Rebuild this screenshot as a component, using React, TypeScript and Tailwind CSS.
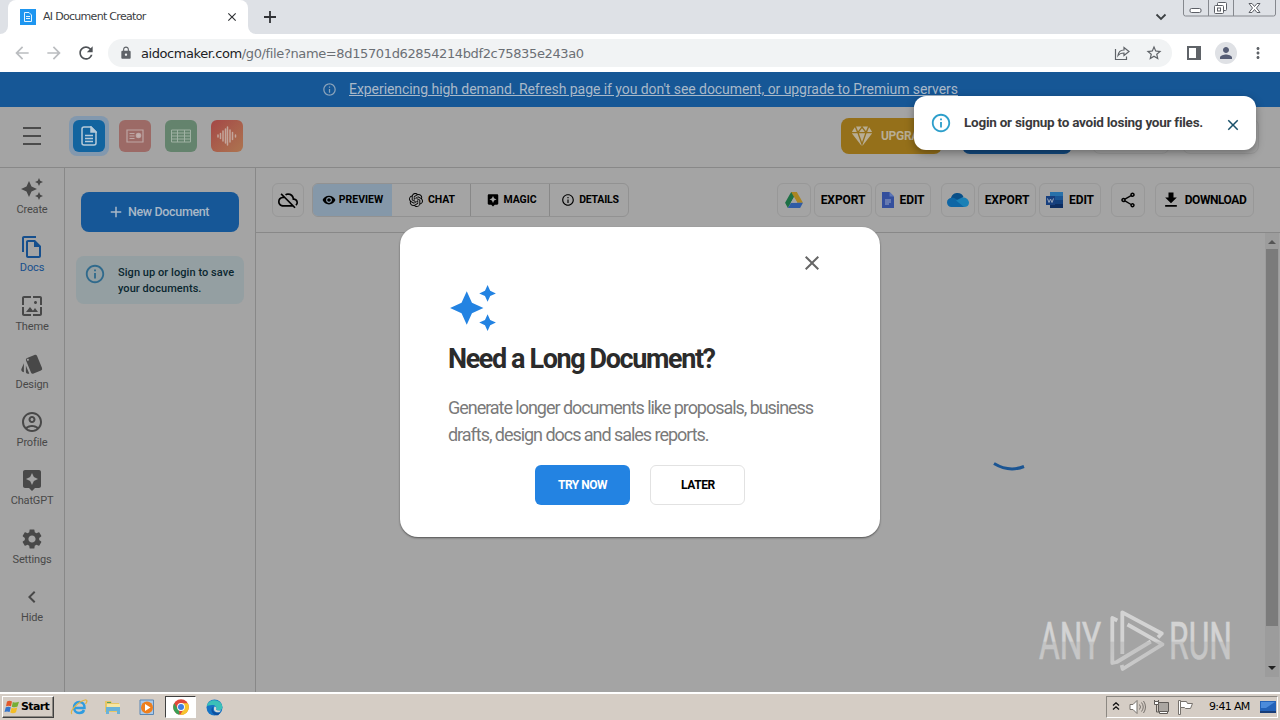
import type { ReactNode } from 'react'
import clsx from 'clsx'
import {
  MdAdd,
  MdArrowBack,
  MdArrowForward,
  MdAssistant,
  MdAutoAwesome,
  MdChevronLeft,
  MdClose,
  MdDownload,
  MdInfoOutline,
  MdLock,
  MdMoreVert,
  MdOutlineAccountCircle,
  MdOutlineCloudOff,
  MdOutlineFileCopy,
  MdOutlineShare,
  MdPerson,
  MdRefresh,
  MdSettings,
  MdStarBorder,
  MdStyle,
  MdVisibility,
  MdWallpaper,
} from 'react-icons/md'
import { SiOpenai } from 'react-icons/si'
import { IoDiamond } from 'react-icons/io5'

const sideItems = [
  { label: 'Create', icon: MdAutoAwesome },
  { label: 'Docs', icon: MdOutlineFileCopy, active: true },
  { label: 'Theme', icon: MdWallpaper },
  { label: 'Design', icon: MdStyle },
  { label: 'Profile', icon: MdOutlineAccountCircle },
  { label: 'ChatGPT', icon: MdAssistant },
  { label: 'Settings', icon: MdSettings },
  { label: 'Hide', icon: MdChevronLeft },
]

function TabStrip() {
  return (
    <div className="flex h-[34px] bg-[#dee1e6] font-['DejaVu_Sans',sans-serif]">
      <div className="flex w-2 items-end bg-white">
        <div className="h-full w-2 rounded-br-lg bg-[#dee1e6]" />
      </div>
      <div className="flex w-60 items-center rounded-t-lg bg-white pl-3">
        <div className="flex h-4 w-4 items-center justify-center bg-[#1e96f0]">
          <svg width="10" height="12" viewBox="0 0 10 12" fill="none" stroke="#e3f3ff">
            <path d="M1.5 1.5h4.500l2.500 2.500v6.500h-7zM3 5.500h4M3 7.500h4" />
          </svg>
        </div>
        <span className="ml-[7px] flex-1 pt-px text-[11px] tracking-[-0.7px] whitespace-nowrap text-[#3c4043]">
          AI Document Creator
        </span>
        <MdClose className="mr-[9px] h-3.5 w-3.5 text-[#303236]" />
      </div>
      <div className="w-2 bg-white">
        <div className="h-full w-2 rounded-bl-lg bg-[#dee1e6]" />
      </div>
      <svg className="mt-2.5 ml-[7px] h-3.5 w-3.5" viewBox="0 0 14 14" stroke="#303236" strokeWidth="1.800">
        <path d="M7 1v12M1 7h12" />
      </svg>
      <div className="flex-1" />
      <svg className="mt-3 mr-4 h-3 w-3" viewBox="0 0 12 12" fill="none" stroke="#3c4043" strokeWidth="1.800">
        <path d="M1.500 2.500 6 7l4.500-4.500" />
      </svg>
      <svg className="mr-1 h-[17px] w-[93px]" viewBox="0 0 93 17" fill="none" stroke="#85888e">
        <path d="M.5 0v14a2 2 0 0 0 2 2h88a2 2 0 0 0 2-2V0M25.500 0v16M50.500 0v16" />
        <g stroke="#5c5f66">
          <rect x="7" y="8.500" width="11" height="4" rx="1.500" fill="#fff" />
          <rect x="34.500" y="2.500" width="9" height="8" rx="1" fill="#fff" />
          <rect x="31.500" y="5.500" width="9" height="8" rx="1" fill="#fff" />
          <rect x="34.500" y="8" width="3" height="3" />
          <path d="M66 3.500h3l2.500 3 2.500-3h3L73.500 8l3.500 4.500h-3l-2.500-3-2.500 3h-3L69.500 8z" fill="#fff" />
        </g>
      </svg>
    </div>
  )
}

function AddressBar() {
  return (
    <div className="flex h-[38px] items-center bg-white pb-px font-['DejaVu_Sans',sans-serif]">
      <MdArrowBack className="ml-3 h-5 w-5 text-[#bbbdc0]" />
      <MdArrowForward className="ml-3 h-5 w-5 text-[#bbbdc0]" />
      <MdRefresh className="ml-3 h-5 w-5 text-[#4e5256]" />
      <div className="ml-3 flex h-7 w-[1064px] items-center rounded-full bg-[#f1f3f4] pl-[11px]">
        <MdLock className="h-3.5 w-3.5 text-[#5f6368]" />
        <span className="ml-2 pt-0.5 text-[13px] whitespace-nowrap text-[#202124]">
          <span className="tracking-[-0.42px]">aidocmaker.com</span>
          <span className="tracking-[-0.37px] text-[#6b6f74]">/g0/file?name=8d15701d62854214bdf2c75835e243a0</span>
        </span>
        <div className="flex-1" />
        <svg className="mr-[15px] h-4 w-4" viewBox="0 0 16 16" fill="none" stroke="#5f6368" strokeWidth="1.200">
          <path d="M1.500 4v10.500h11v-3M4 10.500c.5-4 3-5.500 6-5.500V2.500l5 4-5 4V8c-2.500 0-4.500.5-6 2.500z" />
        </svg>
        <MdStarBorder className="mr-[9px] h-[18px] w-[18px] text-[#5f6368]" />
      </div>
      <svg className="ml-[15px] h-3.5 w-3.5" viewBox="0 0 14 14">
        <path d="M1 1h12v12H1z" fill="none" stroke="#5f6368" strokeWidth="2" />
        <path d="M9 1h4v12H9z" fill="#5f6368" />
      </svg>
      <div className="ml-[14px] flex h-[22px] w-[22px] items-center justify-center rounded-full bg-[#dfe1e5]">
        <MdPerson className="h-[18px] w-[18px] text-[#565d75]" />
      </div>
      <MdMoreVert className="ml-3 h-[18px] w-[18px] text-[#5f6368]" />
    </div>
  )
}

function Banner() {
  return (
    <div className="flex h-[35px] items-center bg-[#165796] pl-[322px] text-[#a9b9c9]">
      <MdInfoOutline className="h-[15px] w-[15px] text-[#8ba3ba]" />
      <span className="ml-3 text-[14px] leading-[17px] tracking-[-0.06px] whitespace-nowrap underline">
        Experiencing high demand. Refresh page if you don't see document, or upgrade to Premium servers
      </span>
    </div>
  )
}

function Header() {
  return (
    <div className="flex h-[61px] items-center border-b border-[#888888] pb-0.5 pl-[23px]">
      <svg width="18" height="20" viewBox="0 0 18 20" stroke="#4b4b4b" strokeWidth="2">
        <path d="M0 2h18M0 10h18M0 18h18" />
      </svg>
      <div className="ml-7 flex h-10 w-10 items-center justify-center rounded-lg bg-[#8298ae]">
        <div className="flex h-8 w-8 items-center justify-center rounded-md bg-[#12649f]">
          <svg width="16" height="20" viewBox="0 0 16 20" fill="none" stroke="#b6cad9" strokeWidth="1.500">
            <path d="M3 1h7l5 5v11a2 2 0 0 1-2 2H3a2 2 0 0 1-2-2V3a2 2 0 0 1 2-2zM4 9.500h8M4 12.500h8M4 15.500h8" />
            <path d="M10 1v5h5z" fill="#b6cad9" />
          </svg>
        </div>
      </div>
      <div className="ml-[10px] flex h-8 w-8 items-center justify-center rounded-md bg-[#9c6a66]">
        <svg width="18" height="14" viewBox="0 0 18 14" fill="none" stroke="#bda6a4" strokeWidth="1.200">
          <path d="M1 1h16v12H1zM3.500 4.500h5M3.500 7h5M3.500 9.500h5" />
          <circle cx="12.500" cy="6.500" r="2.200" fill="#c4b1af" />
        </svg>
      </div>
      <div className="ml-[14px] flex h-8 w-8 items-center justify-center rounded-md bg-[#64836d]">
        <svg width="20" height="14" viewBox="0 0 20 14" fill="none" stroke="#9fb1a3">
          <path d="M.5 1h19v12H.5zM.5 4h19M.5 7h19M.5 10h19M6.500 1v12M13.500 1v12" />
        </svg>
      </div>
      <div className="ml-[14px] flex h-8 w-8 items-center justify-center rounded-md bg-linear-to-br from-[#a44747] to-[#ac7550]">
        <svg width="20" height="20" viewBox="0 0 20 20" stroke="#c3a59b" strokeWidth="1.500" strokeLinecap="round">
          <path d="M1 9v2M3.500 7.500v5M6 5v10M8.500 3v14M10.500 1v18M13 4v12M15.500 6.500v7M18.500 9v2" />
        </svg>
      </div>
      <div className="ml-[598px] flex h-9 w-[101px] shrink-0 items-center rounded-lg bg-[#95701a] pl-2.5 text-[#b8ad94]">
        <IoDiamond className="h-[22px] w-[22px]" />
        <span className="ml-2 text-xs font-bold tracking-tight">UPGRADE</span>
      </div>
      <div className="ml-5 h-9 w-[110px] rounded-lg bg-[#124a81]" />
      <div className="ml-5 h-9 w-[78px] rounded-lg border border-[#999999]" />
      <div className="ml-3 h-9 w-[77px] rounded-lg border border-[#999999]" />
    </div>
  )
}

function Sidebar() {
  return (
    <div className="w-[65px] shrink-0 border-r border-[#888888] pt-[9px]">
      {sideItems.map(({ label, icon: Icon, active }) => (
        <div
          key={label}
          className={clsx('flex h-[58.3px] flex-col items-center gap-px', active ? 'text-[#164f8d]' : 'text-[#484848]')}
        >
          <Icon className="h-6 w-6" />
          <span className="text-[11px] leading-4 tracking-[-0.15px]">{label}</span>
        </div>
      ))}
    </div>
  )
}

function DocsPanel() {
  return (
    <div className="w-[191px] shrink-0 border-r border-[#888888]">
      <div className="mt-6 ml-4 flex h-10 w-[158px] items-center rounded-lg bg-[#165797] pl-[26px] text-[#a9b8c7]">
        <MdAdd className="h-[18px] w-[18px]" />
        <span className="ml-[3px] text-[12.500px] font-medium tracking-[-0.35px] whitespace-nowrap">New Document</span>
      </div>
      <div className="mt-6 ml-[11px] flex h-12 w-[168px] rounded-lg bg-[#949fa2]">
        <MdInfoOutline className="mt-[7px] ml-2 h-[22px] w-[22px] text-[#306a8c]" />
        <p className="mt-[9px] ml-3 text-[11px] leading-4 font-medium tracking-[0.06px] whitespace-nowrap text-[#0b2730]">
          Sign up or login to save
          <br />
          your documents.
        </p>
      </div>
    </div>
  )
}

function ToolButton({ className, children }: { className: string; children: ReactNode }) {
  return (
    <div
      className={clsx(
        'flex h-[34px] shrink-0 items-center justify-center rounded-md border border-[#989898] text-[12px] font-bold whitespace-nowrap text-black',
        className,
      )}
    >
      {children}
    </div>
  )
}

function DriveIcon() {
  return (
    <svg className="mr-px" width="18" height="16" viewBox="0 0 19 17">
      <path d="M6.500 0h6l-9.500 17L0 11.500z" fill="#1d7045" />
      <path d="M6.500 0h6L19 11.500h-6z" fill="#aa8522" />
      <path d="M3 17l3.500-5.500H19L16 17z" fill="#2f5ba5" />
      <path d="M9.500 5.500 13 11.500H6z" fill="#a4a4a4" />
    </svg>
  )
}

function MainToolbar() {
  return (
    <div className="flex h-[65px] items-center border-b border-[#888888] pl-4">
      <ToolButton className="w-8">
        <MdOutlineCloudOff className="h-5 w-5" />
      </ToolButton>
      <div className="ml-2 flex h-[34px] w-[317px] shrink-0 overflow-hidden rounded-md border border-[#929292] text-[10.500px] font-bold text-black">
        <div className="flex w-[79px] items-center justify-center gap-[3px] bg-[#8598a9]">
          <MdVisibility className="h-3.5 w-3.5" />
          PREVIEW
        </div>
        <div className="flex w-[79px] items-center justify-center gap-[5px] border-r border-[#888888] pl-0.5 tracking-[-0.1px]">
          <SiOpenai className="h-3.5 w-3.5" />
          CHAT
        </div>
        <div className="flex w-[79px] items-center justify-center gap-1 border-r border-[#888888] pl-0.5 tracking-[-0.1px]">
          <MdAssistant className="h-3.5 w-3.5" />
          MAGIC
        </div>
        <div className="flex w-[78px] items-center justify-center gap-1 pl-0.5 tracking-[-0.2px]">
          <MdInfoOutline className="h-3.5 w-3.5" />
          DETAILS
        </div>
      </div>
      <ToolButton className="ml-[148px] w-[34px]">
        <DriveIcon />
      </ToolButton>
      <ToolButton className="ml-[3px] w-[58px] tracking-[-0.1px]">EXPORT</ToolButton>
      <ToolButton className="ml-[3px] w-14 gap-1.5 tracking-[-0.1px]">
        <svg width="12" height="16" viewBox="0 0 12 16">
          <path d="M0 0h7.500L12 4.500V16H0z" fill="#344f9d" />
          <path d="M7.500 0 12 4.500H7.500z" fill="#5d77b8" />
          <path d="M3 8h6M3 10h6M3 12h4" stroke="#98a5c5" />
        </svg>
        EDIT
      </ToolButton>
      <ToolButton className="ml-[10px] w-[34px]">
        <svg width="22" height="14" viewBox="0 0 22 14">
          <path d="M4 5C5 1 8 0 10.500 0c3 0 5 1.500 6 4l-8 6L2 12z" fill="#084f88" />
          <path d="M0 9.500C0 6.500 2 5 4.500 4.700c2-.2 3 .3 4.500 1.300L19 12c-1 1.500-2 2-3 2H4.500C2 14 0 12 0 9.500z" fill="#0e66a5" />
          <path d="M9 7.500l5-2.500c3-1.500 7.500.5 8 4.500 0 3-2 4.500-5 4.500z" fill="#1a80b6" />
        </svg>
      </ToolButton>
      <ToolButton className="ml-[3px] w-[58px] tracking-[-0.1px]">EXPORT</ToolButton>
      <ToolButton className="ml-[3px] w-[62px] gap-1.5 tracking-[-0.1px]">
        <svg width="17" height="16" viewBox="0 0 17 16">
          <path d="M4 0h13v4H4z" fill="#2871aa" />
          <path d="M4 4h13v4H4z" fill="#1a5594" />
          <path d="M4 8h13v4H4z" fill="#123f7c" />
          <path d="M4 12h13v4H4z" fill="#0c2c60" />
          <path d="M0 4h9v9H0z" fill="#173f7e" />
          <path d="M1.500 6.500 3 10.500l1.500-3.500L6 10.500l1.500-4" fill="none" stroke="#9ba8bb" />
        </svg>
        EDIT
      </ToolButton>
      <ToolButton className="ml-[10px] w-[34px]">
        <MdOutlineShare className="h-[18px] w-[18px]" />
      </ToolButton>
      <ToolButton className="ml-[10px] w-[99px] gap-1 pr-0.5 tracking-[-0.45px]">
        <MdDownload className="h-5 w-5" />
        DOWNLOAD
      </ToolButton>
    </div>
  )
}

function Scrollbar() {
  return (
    <div className="flex h-[444px] w-[14px] flex-col items-center bg-[#9c9c9c]">
      <svg className="mt-[7px] mb-[5px] h-1 w-2" viewBox="0 0 8 4">
        <path d="M0 4l4-4 4 4z" fill="#555" />
      </svg>
      <div className="h-[377px] w-3 bg-[#7b7b7b]" />
      <div className="flex-1" />
      <svg className="mb-[7px] h-1 w-2" viewBox="0 0 8 4">
        <path d="M0 0l4 4 4-4z" fill="#222" />
      </svg>
    </div>
  )
}

function Watermark() {
  return (
    <svg className="absolute top-[608px] left-[1036px] overflow-visible" width="204" height="66" viewBox="0 0 204 66">
      <defs>
        <linearGradient id="wm" x1="0" y1="0" x2="0" y2="66" gradientUnits="userSpaceOnUse">
          <stop offset="0.500" stopColor="#d3d3d3" />
          <stop offset="0.520" stopColor="#c3c3c3" />
          <stop offset="1" stopColor="#cbcbcb" />
        </linearGradient>
      </defs>
      <g fill="url(#wm)" stroke="url(#wm)" strokeWidth="0.600" fontFamily="Roboto, sans-serif" fontSize="51.500">
        <text x="3" y="51.300" textLength="62" lengthAdjust="spacingAndGlyphs">ANY</text>
        <text x="133" y="51.300" textLength="63" lengthAdjust="spacingAndGlyphs">RUN</text>
      </g>
      <g fill="none" stroke="url(#wm)" strokeWidth="3.800" strokeLinejoin="round">
        <path d="M81.300 12.500l-5-2.500v45l4.500-1 34-20.500" />
        <path d="M86.300 46V4.300l39.500 21.200-3.800 3.800" />
        <path d="M91.500 16.500l35 19.800-39.800 24.700-1-4" />
      </g>
    </svg>
  )
}

function LongDocumentDialog() {
  return (
    <div className="absolute top-[227px] left-[400px] flex h-[310px] w-[480px] flex-col rounded-[18px] bg-white px-12 shadow-[0_1px_2px_rgba(0,0,0,0.5)]">
      <MdClose className="mt-6 mr-2 h-6 w-6 self-end text-[#666666]" />
      <MdAutoAwesome className="mt-2 h-[50px] w-[50px] text-[#2383e2]" />
      <h2 className="mt-2 text-[27px] leading-9 font-bold tracking-[-1.4px] whitespace-nowrap text-[#2b2b2b]">
        Need a Long Document?
      </h2>
      <p className="mt-[17px] text-lg leading-[27px] tracking-[-1.04px] whitespace-nowrap text-[#7a7a7a]">
        Generate longer documents like proposals, business
        <br />
        drafts, design docs and sales reports.
      </p>
      <div className="mt-[17px] flex justify-center gap-5 text-xs font-bold">
        <button className="h-10 w-[95px] rounded-md bg-[#2383e2] tracking-[-0.5px] text-white">TRY NOW</button>
        <button className="h-10 w-[95px] rounded-md border border-[#e2e2e2] pl-px tracking-[-0.4px] text-black">LATER</button>
      </div>
    </div>
  )
}

function Toast() {
  return (
    <div className="absolute top-24 left-[914px] flex h-[54px] w-[342px] items-center rounded-xl bg-white pl-4 shadow-[0_3px_8px_rgba(0,0,0,0.35)]">
      <MdInfoOutline className="h-[22px] w-[22px] text-[#2e9fcb]" />
      <span className="ml-3 pb-0.5 text-[13.500px] font-bold tracking-[-0.24px] whitespace-nowrap text-[#3a3a3c]">
        Login or signup to avoid losing your files.
      </span>
      <MdClose className="absolute top-5 right-[14px] h-[18px] w-[18px] text-[#19506a]" />
    </div>
  )
}

function Taskbar() {
  return (
    <div className="flex h-7 items-center border-t-2 border-white bg-[#d5cdc5] font-['DejaVu_Sans',sans-serif] text-black">
      <div className="ml-[2px] flex h-[22px] w-[52px] items-center border border-t-white border-r-[#404040] border-b-[#404040] border-l-white pl-px shadow-[inset_-1px_-1px_#8c8882]">
        <svg width="16" height="16" viewBox="0 0 16 16">
          <path d="M3 2.500Q5.500 1 8 2.500L7 7.300Q4.500 6 2 7.300z" fill="#e2582a" />
          <path d="M8.800 3Q11.500 4.300 15 2.800L13.500 7.500Q11 9 7.800 7.700z" fill="#76ae36" />
          <path d="M1.800 8.300Q4.500 7 6.800 8.300L5.600 13Q3 12 .5 13z" fill="#3575cb" />
          <path d="M7.600 8.700Q10.500 10 13.200 8.500L12 13.200Q9 15 6.300 13.400z" fill="#f3bd27" />
        </svg>
        <span className="ml-px text-[11px] font-bold tracking-[-0.65px]">Start</span>
      </div>
      <svg className="ml-4 h-[18px] w-[18px]" viewBox="0 0 18 18" fill="none">
        <path d="M4 10h10.500c.3-4-2-6-5.200-6-3.300 0-5.300 2.300-5.300 5.500s2 5.500 5.300 5.500c2.300 0 4-1 4.700-3" stroke="#2f9ce0" strokeWidth="2.500" />
        <path d="M2 16C-1 13 9 3 15 2c3-.3 2 2 .5 4" stroke="#e0b445" strokeWidth="1.200" />
      </svg>
      <svg className="ml-4 h-[18px] w-[18px]" viewBox="0 0 18 18">
        <path d="M1 3h6l1 2h7v9H1z" fill="#e7c566" />
        <path d="M3 6h13v7H3z" fill="#f6e6a2" />
        <path d="M2 9h14v7h-3v-3H5v3H2z" fill="#69b2d8" />
        <path d="M3 4h4v1H3z" fill="#59a35b" />
      </svg>
      <svg className="ml-[17px] h-[17px] w-[17px]" viewBox="0 0 17 17">
        <path d="M1 1h13.500v14.500H1z" fill="#a9c9ea" stroke="#5a87b4" />
        <circle cx="8" cy="8.500" r="6" fill="#ee7f1d" />
        <path d="M6 5l5.500 3.500L6 12z" fill="#fff" />
      </svg>
      <div className="ml-[9px] flex h-[22px] w-[31px] items-center justify-center border border-t-[#404040] border-r-white border-b-white border-l-[#404040] bg-white">
        <svg width="16" height="16" viewBox="0 0 16 16">
          <circle cx="8" cy="8" r="7.800" fill="#e0483a" />
          <path d="M1.200 4.200 6 12l.5 3.700A7.800 7.800 0 0 1 1.200 4.200z" fill="#3a9f55" />
          <path d="M8 4.300h6.900A7.800 7.800 0 0 1 7.200 15.800L11.500 9z" fill="#f7c52d" />
          <circle cx="8" cy="8" r="3.900" fill="#fff" />
          <circle cx="8" cy="8" r="3" fill="#3f7fe2" />
        </svg>
      </div>
      <svg className="ml-[10px] h-[17px] w-[17px]" viewBox="0 0 17 17">
        <circle cx="8.500" cy="8.500" r="8" fill="#1673c4" />
        <path d="M.8 7C2 1.500 8 .2 12 2c3.500 1.500 5 5 4.200 7.500-.8 2-4.200 2.500-6 1.500 1-3-1-5-4-5C3.500 6 1.500 7 .8 7z" fill="#3bc0b8" />
        <path d="M7 8c-1.500 4 2.500 7 7.500 5l-2 3c-4 1-7-2-7-5 0-1.500.5-2.500 1.500-3z" fill="#0d4fa0" />
        <path d="M8.500 7.500c1.500 0 2.500 1.500 1.500 3 1 1.500 4 1.200 5 .7l-1.500 2C10 14 6.500 12 8.500 7.500z" fill="#d5d8d6" />
      </svg>
      <div className="flex-1" />
      <div className="mr-[2px] flex h-[22px] w-[172px] items-center border border-t-[#8c8882] border-r-white border-b-white border-l-[#8c8882]">
        <svg className="mb-0.5 ml-[5px] h-2 w-2" viewBox="0 0 8 8" fill="none" stroke="#111" strokeWidth="1.300">
          <path d="M1 3.500 4 .8l3 2.700M1 7.500l3-2.700 3 2.700" />
        </svg>
        <svg className="ml-[9px] h-4 w-[17px]" viewBox="0 0 17 16" fill="none" stroke="#77726d">
          <path d="M1 5.500h3l4-4v13l-4-4H1z" fill="#fff" />
          <path d="M10.500 5.500q2 2.500 0 5M12.500 3.500q3.500 4.500 0 9M14.500 2q4 6 0 12" />
        </svg>
        <svg className="ml-[7px] h-4 w-[17px]" viewBox="0 0 17 16" fill="none" stroke="#5f5b57">
          <path d="M5.500 3.500h10v9h-10z" fill="#aaa6a1" />
          <path d="M1.500 1v4h4V1M3.500 5v8h3" />
          <path d="M6.500 14.500h8v-2h-8z" fill="#fff" />
          <path d="M1.500 2.500h4v3h-4z" fill="#fff" />
        </svg>
        <svg className="ml-[7px] h-4 w-[17px]" viewBox="0 0 17 16" stroke="#77726d">
          <path d="M1.500 1.500h2v14h-2z" fill="#fff" />
          <path d="M3.500 2.500h6l1 2h5l-2 5h-5l-1-1h-4z" fill="#fff" />
        </svg>
        <span className="ml-[15px] text-[11px] tracking-[-0.65px] whitespace-nowrap">9:41 AM</span>
        <svg className="ml-[10px] h-[14px] w-4" viewBox="0 0 16 14">
          <path d="M0 1h16v11H0z" fill="#2362b8" />
          <path d="M1 2h14L6 8H1z" fill="#4b8bdb" />
          <path d="M0 11h16v2H0z" fill="#183d78" />
        </svg>
      </div>
    </div>
  )
}

export default function App() {
  return (
    <div className="relative flex h-[720px] w-[1280px] flex-col overflow-hidden bg-[#a4a4a4] font-[Roboto,sans-serif]">
      <TabStrip />
      <AddressBar />
      <Banner />
      <Header />
      <div className="flex min-h-0 flex-1">
        <Sidebar />
        <DocsPanel />
        <div className="flex min-w-0 flex-1 flex-col">
          <MainToolbar />
          <div className="flex flex-1 pr-[1px]">
            <div className="flex flex-1 items-start pt-[228px] pl-[737px]">
              <svg width="32" height="12" viewBox="0 0 32 12" fill="none" stroke="#1b5593" strokeWidth="3">
                <path d="M1 2.500Q16 11.500 31 5.500" />
              </svg>
            </div>
            <Scrollbar />
          </div>
        </div>
      </div>
      <Taskbar />
      <Watermark />
      <LongDocumentDialog />
      <Toast />
    </div>
  )
}
